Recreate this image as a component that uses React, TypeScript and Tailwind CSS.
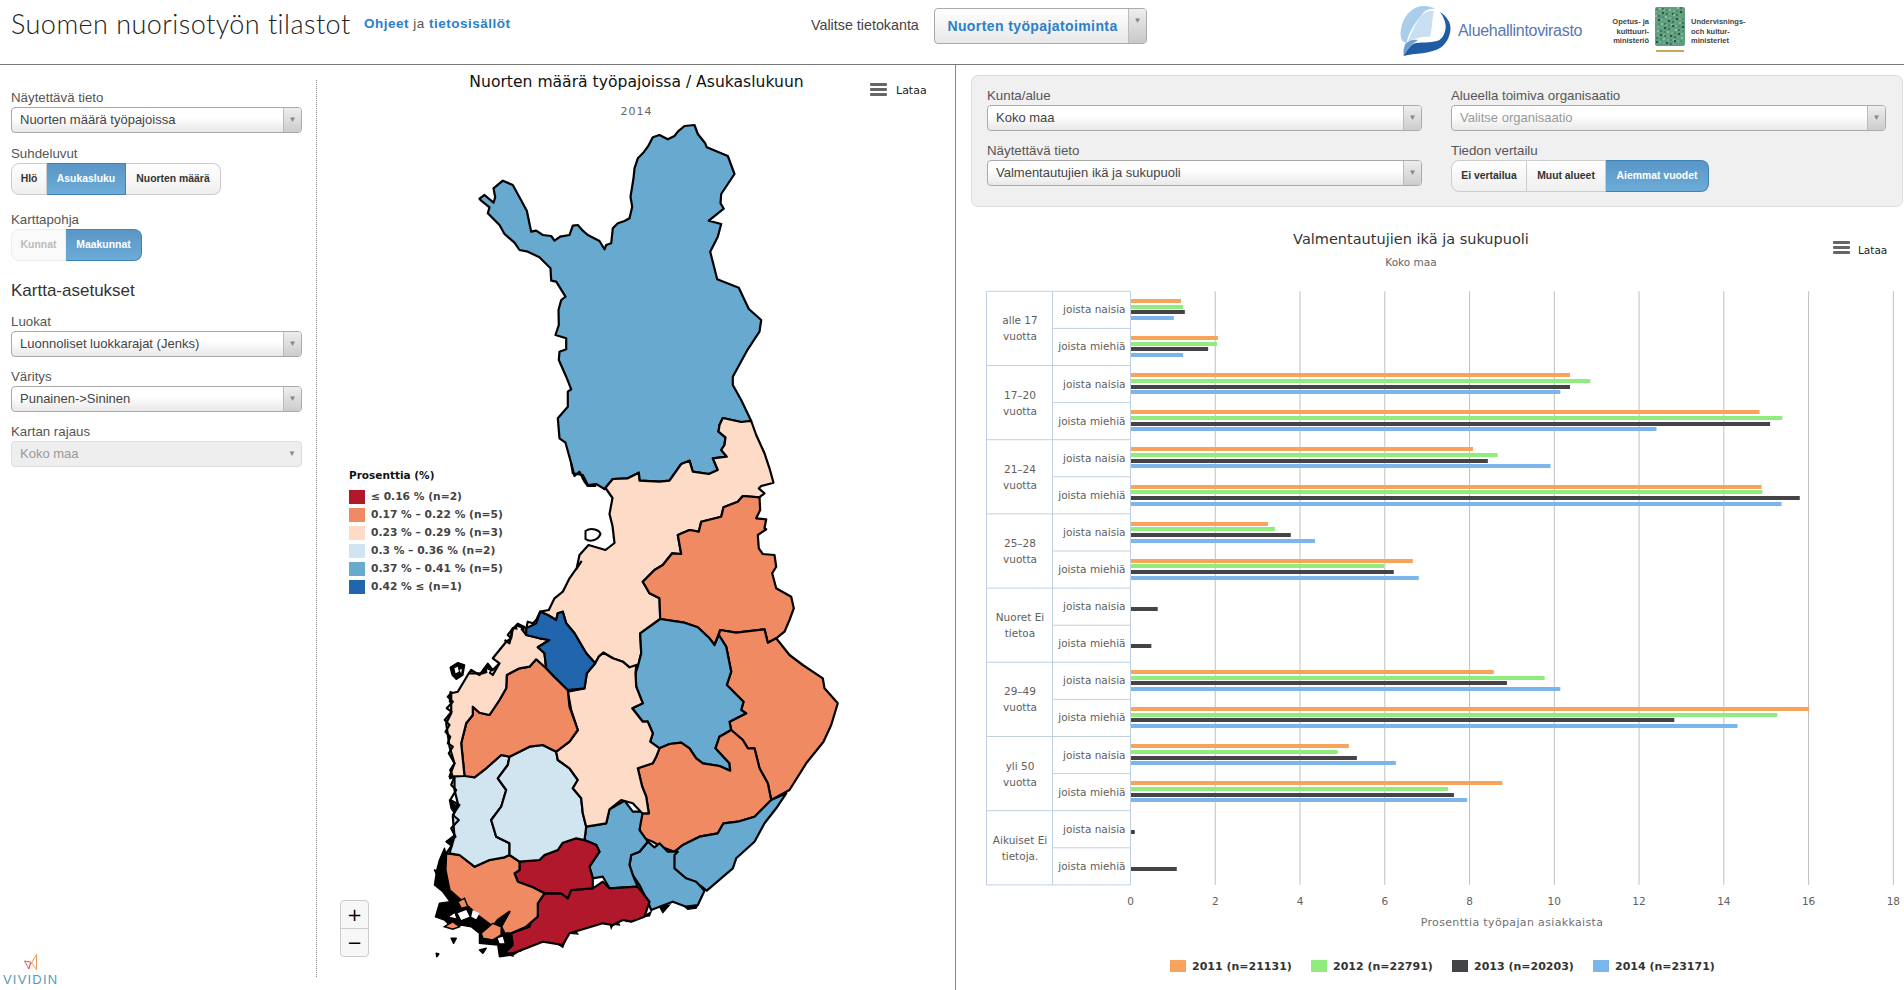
const toPoints = (ox: number, oy: number, s: string) =>
  s
    .trim()
    .split(/\s+/)
    .map((p) => {
      const [x, y] = p.split(",").map(Number);
      return `${(ox + x / 3).toFixed(1)},${(oy + y / 3).toFixed(1)}`;
    })
    .join(" ");

// traced from crops of the map, each crop has its own origin
const z5 = (s: string) => toPoints(440, 110, s);
const z10 = (s: string) => toPoints(430, 560, s);
const z11 = (s: string) => toPoints(430, 770, s);
const z12 = (s: string) => toPoints(620, 420, s);

const RED = "#b2182b";
const ORANGE = "#ef8a62";
const PEACH = "#fddbc7";
const LIGHT = "#d1e5f0";
const BLUE = "#67a9cf";
const DARK = "#2166ac";

const regions: { fill: string; points: string }[] = [
  {
    fill: BLUE,
    points: z5(
      "120,266 135,255 162,278 167,262 162,235 190,212 220,225 240,262 262,302 275,365 290,362 310,375 335,378 345,392 362,380 390,375 400,347 415,345 430,362 445,375 480,393 495,418 500,405 515,400 520,355 535,340 555,333 570,325 578,290 573,260 582,205 585,175 595,145 610,130 625,110 640,82 660,75 685,88 705,78 715,65 735,48 765,45 775,72 797,100 802,112 865,138 885,192 845,252 843,280 853,296 808,332 845,342 835,380 812,425 833,508 898,533 928,597 965,630 960,665 925,718 880,800 880,825 905,870 935,933 905,936 850,924 840,945 837,965 858,982 855,1005 845,1020 862,1040 820,1045 835,1080 808,1092 760,1085 750,1052 725,1062 690,1112 660,1115 600,1112 598,1088 565,1105 520,1107 495,1137 470,1122 445,1125 430,1095 400,1090 395,1060 378,998 360,985 355,925 385,890 385,845 395,838 380,800 358,750 360,725 380,718 380,685 348,675 358,645 357,600 365,570 378,560 350,515 335,512 333,475 300,442 265,425 240,420 225,398 195,372 180,345 145,310 150,292 125,272"
    ),
  },
  {
    fill: PEACH,
    points: [
      z5(
        "495,1137 520,1107 565,1105 598,1088 600,1112 660,1115 690,1112 725,1062 750,1052 760,1085 808,1092 835,1080 820,1045 862,1040 845,1020 855,1005 858,982 837,965 840,945 850,924 905,936 935,933 950,975 975,1030 990,1075 1002,1118 965,1128 958,1135 975,1150 962,1160"
      ),
      z12(
        "420,232 370,228 355,245 312,262 305,290 245,305 238,335 210,330 175,345 185,402 158,400 130,435 105,450 70,485 90,520 120,535 122,597 62,640 65,700 55,740"
      ),
      z10(
        "600,322 580,305 550,295 522,278 508,290 497,310 470,280 435,220 410,190 400,155 385,160 380,180 355,165 332,155 358,150 375,115 400,95 420,55 455,5"
      ),
      "577,569 580,555 589,545 606,550 615,543 613,526 610,514 613,498 606,488",
    ].join(" "),
  },
  {
    fill: ORANGE,
    points: z12(
      "420,232 422,270 410,295 440,298 435,325 440,328 415,345 418,385 430,402 465,405 470,440 458,460 470,505 515,530 523,565 510,600 495,635 470,655 445,668 435,628 350,638 302,630 285,675 270,655 235,622 195,608 122,597 120,535 90,520 70,485 105,450 130,435 158,400 185,402 175,345 210,330 238,335 245,305 305,290 312,262 355,245 370,228"
    ),
  },
  {
    fill: ORANGE,
    points: z12(
      "302,630 350,638 435,628 445,668 470,655 510,705 550,735 610,775 615,805 655,850 635,915 612,965 560,1030 510,1110 455,1140 445,1090 420,1045 405,985 385,985 370,960 335,930 330,905 380,880 365,870 372,845 322,795 335,755 320,680 298,645"
    ),
  },
  {
    fill: BLUE,
    points: z12(
      "122,597 195,608 235,622 270,655 285,675 298,645 320,680 335,755 322,795 372,845 365,870 380,880 330,905 335,930 300,950 288,985 330,1030 332,1052 300,1038 250,1030 230,1015 210,985 185,968 150,972 120,985 92,965 100,940 85,905 70,905 38,865 70,850 50,800 48,760 55,740 65,700 62,640"
    ),
  },
  {
    fill: ORANGE,
    points: z12(
      "120,985 150,972 185,968 210,985 230,1015 250,1030 300,1038 332,1052 330,1030 288,985 300,950 335,930 370,960 385,985 405,985 420,1045 445,1090 455,1140 405,1190 355,1205 312,1210 295,1240 240,1250 190,1275 165,1295 125,1280 100,1265 62,1250 60,1215 68,1180 88,1180 80,1130 68,1100 55,1045 100,1030 110,1010"
    ),
  },
  {
    fill: BLUE,
    points: z12(
      "455,1140 500,1120 470,1165 435,1210 405,1265 350,1315 340,1345 262,1412 240,1395 195,1385 165,1350 160,1320 165,1295 190,1275 240,1250 295,1240 312,1210 355,1205 405,1190"
    ),
  },
  {
    fill: BLUE,
    points: z11(
      "655,215 675,232 690,220 715,245 745,245 735,255 735,295 770,325 800,335 825,362 805,405 770,410 730,395 690,410 665,420 655,395 630,345 610,315 600,285 605,255 630,245"
    ),
  },
  {
    fill: BLUE,
    points: z11(
      "540,118 585,92 610,125 640,125 630,180 655,215 630,245 605,255 600,285 610,315 625,350 540,355 520,320 490,325 480,290 510,245 500,225 465,210 470,170 530,160"
    ),
  },
  {
    fill: RED,
    points: z11(
      "345,370 400,370 415,385 425,360 490,355 520,335 540,355 625,350 660,395 645,440 605,455 580,450 550,465 520,460 470,475 420,490 400,525 340,515 290,535 250,550 225,550 250,525 245,490 300,470 325,400"
    ),
  },
  {
    fill: RED,
    points: z11(
      "270,275 330,270 345,255 385,240 400,218 440,205 470,212 500,225 510,245 480,290 490,325 490,355 425,360 415,385 395,370 345,370 310,352 265,335 255,310 270,300"
    ),
  },
  {
    fill: ORANGE,
    points: z11(
      "50,250 90,255 135,290 180,270 225,262 240,255 270,275 270,300 255,310 265,335 310,352 345,370 325,400 325,440 290,470 245,490 225,490 215,470 240,425 205,450 190,470 150,440 100,395 60,360 48,300"
    ),
  },
  {
    fill: LIGHT,
    points: [
      z10("62,655 100,640 135,652 170,625 215,585 240,590 235,615 205,655"),
      z11(
        "230,60 215,110 185,150 200,200 240,220 240,255 225,262 180,270 135,290 90,255 60,250 75,200 70,140 85,100 75,60 75,20"
      ),
    ].join(" "),
  },
  {
    fill: LIGHT,
    points: [
      z10("240,590 300,560 340,555 380,575 385,600 420,625 445,660"),
      z11(
        "445,30 430,55 455,85 460,130 470,170 465,210 440,205 400,218 385,240 345,255 330,270 270,275 240,255 240,220 200,200 185,150 215,110 230,60 205,25"
      ),
      z10("235,615"),
    ].join(" "),
  },
  {
    fill: PEACH,
    points: [
      z10("497,310 508,290 522,278 550,295 580,305 600,322 620,315"),
      z12(
        "48,760 50,800 70,850 38,865 70,905 85,905 100,940 92,965 120,985 110,1010 100,1030 55,1045 68,1100 80,1130 88,1180 68,1180 40,1150 5,1140"
      ),
      z11("540,118 530,160 470,170 460,130 455,85 430,55 445,30"),
      z10("445,660 420,625 385,600 380,575 420,545 445,510 425,450 415,395 465,385 472,340"),
    ].join(" "),
  },
  {
    fill: ORANGE,
    points: z10(
      "105,648 95,550 110,490 130,465 130,440 150,458 180,465 210,420 230,385 232,345 270,325 300,320 320,298 350,325 372,348 415,390 420,440 445,510 420,545 380,575 340,555 300,560 240,590 215,585 170,625 135,652"
    ),
  },
  {
    fill: PEACH,
    points: z10(
      "60,650 75,610 60,560 50,490 65,460 65,400 85,395 118,340 160,340 190,330 210,310 190,295 230,245 245,235 250,205 275,205 290,225 330,235 360,240 325,262 345,280 350,325 320,298 300,320 270,325 232,345 230,385 210,420 180,465 150,458 130,440 130,465 110,490 95,550 105,648"
    ),
  },
  {
    fill: DARK,
    points: z10(
      "290,225 290,205 320,190 332,155 355,165 380,180 385,160 400,155 410,190 435,220 470,280 497,310 472,340 465,385 415,390 372,348 350,325 345,280 325,262 360,240 330,235"
    ),
  },
];

// the archipelago: mostly black outlines, so drawn as solid blobs
const islands = [
  z11("45,235 30,270 22,300 15,345 40,365 62,395 30,400 18,440 45,450 65,470 95,465 125,470 150,490 150,520 205,525 210,560 250,555 290,530 330,400 200,400 60,300"),
  z11("15,300 25,305 22,315"),
  z11("65,505 80,505 72,520"),
  z11("150,540 170,535 160,550"),
  z11("20,550 28,552 22,560"),
  z10("62,322 85,308 105,315 100,345 80,358 68,345"),
  z10("160,330 175,310 195,335 175,355"),
  z10("62,395 75,400 72,430 60,425"),
  z10("250,205 265,190 285,200 280,225 260,220"),
  z10("200,285 220,262 225,280 210,300"),
  z11("60,90 100,125 75,130 65,115"),
  z11("75,195 50,215 62,225 85,210"),
  z11("45,260 60,250 65,300 45,300"),
];

const coastSpikes = [
  z11("420,490 435,478 445,492"),
  z11("520,460 535,435 545,475 560,445 570,465"),
  z11("570,450 580,420 590,452 600,410 608,448"),
  z11("605,440 618,420 630,438"),
  z11("640,440 660,438 665,425"),
  z11("690,410 700,428 720,405"),
  z11("760,405 775,418 800,415 810,395"),
  z11("340,515 355,505 380,520 400,532 410,505"),
  z11("270,545 300,505 295,530"),
  z11("225,552 250,558 240,545"),
];

// rough stretches of shoreline, drawn on top of the plain outlines
const roughCoast = [
  z10("65,400 55,410 70,425 52,445 66,455 46,480 60,495 48,515 62,530 55,550 70,560 58,580 75,610 62,630 70,650"),
  z11("75,20 65,45 80,60 62,90 90,105 70,135 88,150 65,175 78,200 52,215 68,225 50,250"),
  z5("395,1060 405,1098 420,1085 435,1115 445,1128 470,1128"),
  z10("118,340 125,330 150,345 165,325 190,345 210,310"),
  z10("245,235 235,225 250,205 240,250 225,240"),
  z10("332,155 320,180 310,190 295,185 290,205"),
];

const orangePatches = [
  z11("45,470 70,455 90,470 70,478"),
  z11("155,490 190,460 215,470 215,495 190,510 160,505"),
  z11("85,395 105,385 115,410 95,415"),
];

// gaps in the black of the archipelago
const whiteHoles = [
  z11("85,430 110,420 120,440 95,450"),
  z11("130,420 150,430 140,448 125,440"),
  z11("60,440 75,430 80,445"),
  z11("205,505 220,500 225,520 210,520"),
  z10("75,325 85,320 88,335 78,340"),
  z10("90,330 97,326 95,340"),
  z10("172,328 182,332 175,342"),
  z10("262,200 275,205 268,215"),
];

const legendRows = [
  { color: RED, label: "≤ 0.16 % (n=2)" },
  { color: ORANGE, label: "0.17 % – 0.22 % (n=5)" },
  { color: PEACH, label: "0.23 % – 0.29 % (n=3)" },
  { color: LIGHT, label: "0.3 % – 0.36 % (n=2)" },
  { color: BLUE, label: "0.37 % – 0.41 % (n=5)" },
  { color: DARK, label: "0.42 % ≤ (n=1)" },
];

const groups = [
  ["alle 17", "vuotta"],
  ["17–20", "vuotta"],
  ["21–24", "vuotta"],
  ["25–28", "vuotta"],
  ["Nuoret Ei", "tietoa"],
  ["29–49", "vuotta"],
  ["yli 50", "vuotta"],
  ["Aikuiset Ei", "tietoja."],
];

const series = [
  { name: "2011 (n=21131)", color: "#f7a35c", legendX: 1170 },
  { name: "2012 (n=22791)", color: "#90ed7d", legendX: 1311 },
  { name: "2013 (n=20203)", color: "#434348", legendX: 1452 },
  { name: "2014 (n=23171)", color: "#7cb5ec", legendX: 1593 },
];

const bars: (number | null)[][] = [
  [1.18, 1.23, 1.27, 1.01],
  [2.05, 2.03, 1.82, 1.23],
  [10.36, 10.84, 10.36, 10.13],
  [14.83, 15.37, 15.08, 12.4],
  [8.07, 8.65, 8.42, 9.9],
  [14.88, 14.9, 15.78, 15.35],
  [3.23, 3.4, 3.77, 4.34],
  [6.65, 5.97, 6.2, 6.79],
  [null, null, 0.63, null],
  [null, null, 0.48, null],
  [8.56, 9.76, 8.87, 10.13],
  [16, 15.25, 12.82, 14.31],
  [5.14, 4.88, 5.33, 6.25],
  [8.76, 7.48, 7.62, 7.93],
  [null, null, 0.09, null],
  [null, null, 1.08, null],
];

const AXIS_X = 1130.5;
const UNIT = 42.38;
const TOP = 291.3;
const ROW = 37.1;

function Select({
  label,
  value,
  placeholder,
  disabled,
}: {
  label: string;
  value: string;
  placeholder?: boolean;
  disabled?: boolean;
}) {
  return (
    <div>
      <div className="h-[19px] text-[13.3px] leading-[19px] text-[#555]">{label}</div>
      <div
        className={`flex h-[26px] items-stretch overflow-hidden rounded-[4px] border border-[#aaa] text-[13px] ${
          disabled
            ? "border-[#ddd] bg-[#eee] text-[#999]"
            : "bg-gradient-to-b from-white from-40% to-[#e8e8e8]"
        }`}
      >
        <div
          className={`flex flex-1 items-center pl-[8px] ${
            placeholder ? "text-[#999]" : disabled ? "" : "text-[#444]"
          }`}
        >
          {value}
        </div>
        <div
          className={`flex w-[18px] items-center justify-center text-[8px] text-[#888] ${
            disabled ? "" : "border-l border-[#bbb] bg-gradient-to-b from-[#eee] to-[#ccc]"
          }`}
        >
          ▼
        </div>
      </div>
    </div>
  );
}

function ButtonGroup({
  items,
}: {
  items: { text: string; width: number; active?: boolean; off?: boolean }[];
}) {
  return (
    <div className="flex h-[32px] w-fit">
      {items.map((item, index) => (
        <div
          key={item.text}
          style={{ width: item.width }}
          className={`flex items-center justify-center border text-[10.4px] font-bold ${
            index === 0 ? "rounded-l-[8px]" : "border-l-0"
          } ${index === items.length - 1 ? "rounded-r-[8px]" : ""} ${
            item.active
              ? "border-[#3f82b5] bg-gradient-to-b from-[#5a96c7] to-[#6cacd8] text-white"
              : item.off
                ? "border-[#eee] bg-[#fafafa] text-[#bbb]"
                : "border-[#ccc] bg-gradient-to-b from-white to-[#efefef] text-[#333]"
          }`}
        >
          {item.text}
        </div>
      ))}
    </div>
  );
}

function Hamburger() {
  return (
    <div className="flex w-[17px] flex-col gap-[2px]">
      <div className="h-[3px] rounded-[1px] bg-[#666]" />
      <div className="h-[3px] rounded-[1px] bg-[#666]" />
      <div className="h-[3px] rounded-[1px] bg-[#666]" />
    </div>
  );
}

function AviLogo() {
  return (
    <svg width="52" height="56" viewBox="0 0 52 56" className="mt-[2px] shrink-0">
      <path
        d="M0.7 34C0 20 8 6 22 4C28 3.5 33 5 36 7C28 6 24 9 21 14C14 22 9 30 6.5 41C3 40 1 38 0.7 34Z"
        fill="#a9cdeb"
      />
      <path d="M21 14C25 10 30 8 34 9C32 18 32 28 30 35C24 34 15 36 8 40C11 30 16 21 21 14Z" fill="#c9dff2" />
      <path d="M3.6 54C3 48 4 44 6 41C10 38 14 37 18 38C12 42 7 47 3.6 54Z" fill="#6f9fd0" />
      <path
        d="M3.6 54C8 46 12 42 16 41C25 40 33 41 39.5 38C45 34 46 26 45.6 23C45 18 43 14 40 10C46 14 51 20 50.5 27C50 36 45 43 40 46C30 52 15 51 3.6 54Z"
        fill="#1f5ca6"
      />
    </svg>
  );
}

function OkmEmblem() {
  const dots = Array.from({ length: 90 }, (_, i) => ({
    x: 1 + ((i * 37) % 28),
    y: 1 + ((i * 53) % 37),
    r: 0.5 + (i % 3) * 0.3,
  }));
  return (
    <svg width="30" height="46" viewBox="0 0 30 46" className="shrink-0">
      <rect x="0" y="0" width="30" height="39" rx="2" fill="#5f9f80" />
      {dots.map((d, i) => (
        <circle key={i} cx={d.x} cy={d.y} r={d.r} fill={i % 2 ? "#1f3d30" : "#9cc7ad"} />
      ))}
      <rect x="1" y="43" width="28" height="2" fill="#c8a850" />
    </svg>
  );
}

function VividinLogo() {
  return (
    <div className="absolute bottom-0 left-[3px] flex h-[36px] flex-col items-center overflow-hidden">
      <svg width="14" height="17" viewBox="0 0 14 17" fill="none" strokeWidth="1">
        <path d="M4 15L12.5 0.5V15.5L7 8" stroke="#e59a5c" />
        <path d="M0.5 7L5 15L6.5 8Z" stroke="#dc5a5a" />
      </svg>
      <div className="text-[13px] leading-[17px] tracking-[1.2px] text-[#5b9ab0]">VIVIDIN</div>
    </div>
  );
}

function FinlandMap() {
  return (
    <svg viewBox="317 65 638 925" className="absolute inset-0 h-full w-full">
      {islands.map((points, i) => (
        <polygon key={i} points={points} fill="#000" stroke="#000" strokeWidth="1.5" strokeLinejoin="round" />
      ))}
      {coastSpikes.map((points, i) => (
        <polygon key={i} points={points} fill="#000" stroke="#000" strokeWidth="1.2" />
      ))}
      {regions.map((region, i) => (
        <polygon
          key={i}
          points={region.points}
          fill={region.fill}
          stroke="#000"
          strokeWidth="2.2"
          strokeLinejoin="round"
        />
      ))}
      {roughCoast.map((points, i) => (
        <polyline key={i} points={points} fill="none" stroke="#000" strokeWidth="2.2" strokeLinejoin="round" />
      ))}
      {orangePatches.map((points, i) => (
        <polygon key={i} points={points} fill={ORANGE} stroke="#000" strokeWidth="1.5" />
      ))}
      {whiteHoles.map((points, i) => (
        <polygon key={i} points={points} fill="#fff" />
      ))}
      <path d="M586 531C592 527 600 530 601 534C598 541 590 542 586 539Z" fill="#fff" stroke="#000" strokeWidth="2" />
    </svg>
  );
}

function BarChart() {
  const bottom = TOP + ROW * 16;
  return (
    <svg viewBox="956 207 948 783" className="block h-[783px] w-[948px] font-['DejaVu_Sans',sans-serif]">
      <text x="1411" y="244" textAnchor="middle" fontSize="14.5" fill="#333">
        Valmentautujien ikä ja sukupuoli
      </text>
      <text x="1411" y="266" textAnchor="middle" fontSize="10.5" fill="#666">
        Koko maa
      </text>

      <rect x="1833" y="241" width="17" height="3" rx="1" fill="#666" />
      <rect x="1833" y="246" width="17" height="3" rx="1" fill="#666" />
      <rect x="1833" y="251" width="17" height="3" rx="1" fill="#666" />
      <text x="1858" y="254" fontSize="10.5" fill="#222">
        Lataa
      </text>

      {[2, 4, 6, 8, 10, 12, 14, 16, 18].map((tick) => (
        <line
          key={tick}
          x1={AXIS_X + tick * UNIT}
          x2={AXIS_X + tick * UNIT}
          y1={TOP}
          y2={bottom}
          stroke="#c0c0c0"
        />
      ))}

      {Array.from({ length: 17 }, (_, i) => (
        <line
          key={i}
          x1={i % 2 === 0 ? 986.5 : 1052.5}
          x2={AXIS_X}
          y1={TOP + i * ROW}
          y2={TOP + i * ROW}
          stroke="#c0d0e0"
        />
      ))}
      <line x1="986.5" x2="986.5" y1={TOP} y2={bottom} stroke="#c0d0e0" />
      <line x1="1052.5" x2="1052.5" y1={TOP} y2={bottom} stroke="#c0d0e0" />
      <line x1={AXIS_X} x2={AXIS_X} y1={TOP} y2={bottom} stroke="#c0d0e0" />

      {groups.map((lines, i) => (
        <text key={i} textAnchor="middle" fontSize="10.5" fill="#606060">
          <tspan x="1020" y={TOP + i * 2 * ROW + 33}>
            {lines[0]}
          </tspan>
          <tspan x="1020" y={TOP + i * 2 * ROW + 49}>
            {lines[1]}
          </tspan>
        </text>
      ))}
      {bars.map((_, i) => (
        <text key={i} x="1125.5" y={TOP + i * ROW + 22} textAnchor="end" fontSize="10.5" fill="#606060">
          {i % 2 === 0 ? "joista naisia" : "joista miehiä"}
        </text>
      ))}

      {bars.map((row, i) =>
        row.map((value, s) =>
          value === null ? null : (
            <rect
              key={`${i}-${s}`}
              x={AXIS_X + 0.5}
              y={Math.round(TOP + i * ROW + 7.7 + s * 5.67)}
              width={value * UNIT}
              height="4"
              fill={series[s].color}
            />
          )
        )
      )}

      {Array.from({ length: 10 }, (_, i) => (
        <text key={i} x={AXIS_X + i * 2 * UNIT} y="905" textAnchor="middle" fontSize="10.5" fill="#606060">
          {i * 2}
        </text>
      ))}
      <text x="1512" y="926" textAnchor="middle" fontSize="11" letterSpacing="0.35" fill="#707070">
        Prosenttia työpajan asiakkaista
      </text>

      {series.map((item) => (
        <g key={item.name}>
          <rect x={item.legendX} y="960" width="16" height="12" fill={item.color} />
          <text x={item.legendX + 22} y="970" fontSize="11" fontWeight="bold" fill="#333">
            {item.name}
          </text>
        </g>
      ))}
    </svg>
  );
}

export default function App() {
  return (
    <div className="relative h-[990px] w-[1904px] overflow-hidden bg-white font-['Liberation_Sans',Arial,sans-serif] text-[#333]">
      <header className="flex h-[65px] items-start border-b border-[#777]">
        <div className="flex w-[811px] items-center pl-[11px] pt-[7px]">
          <h1 className="w-[353px] font-['Lato',sans-serif] text-[27px] font-light leading-[34px] tracking-[0.45px] text-[#222]">
            Suomen nuorisotyön tilastot
          </h1>
          <div className="pt-[1px] text-[13.5px] tracking-[0.5px] text-[#555]">
            <a className="font-bold text-[#2b80c9]">Ohjeet</a> ja{" "}
            <a className="font-bold text-[#2b80c9]">tietosisällöt</a>
          </div>
        </div>
        <div className="flex w-[589px] items-center pt-[8px]">
          <span className="w-[123px] text-[14.3px] text-[#444]">Valitse tietokanta</span>
          <div className="flex h-[36px] w-[213px] overflow-hidden rounded-[4px] border border-[#aaa] bg-gradient-to-b from-white to-[#e8e8e8]">
            <div className="flex flex-1 items-center justify-center pl-[2px] text-[14px] font-bold tracking-[0.4px] text-[#2b80c9]">
              Nuorten työpajatoiminta
            </div>
            <div className="flex w-[18px] justify-center border-l border-[#bbb] bg-gradient-to-b from-[#eee] to-[#c8c8c8] pt-[8px] text-[8px] leading-none text-[#888]">
              ▼
            </div>
          </div>
        </div>
        <div className="flex items-start">
          <AviLogo />
          <span className="ml-[6px] mt-[22px] w-[142px] text-[16px] leading-[18px] tracking-[-0.3px] text-[#5a77b0]">
            Aluehallintovirasto
          </span>
          <div className="mt-[17px] w-[49px] text-right text-[7.5px] font-bold leading-[9.5px] text-[#444]">
            Opetus- ja
            <br />
            kulttuuri-
            <br />
            ministeriö
          </div>
          <div className="ml-[6px] mt-[7px]">
            <OkmEmblem />
          </div>
          <div className="ml-[6px] mt-[17px] text-[7.5px] font-bold leading-[9.5px] text-[#444]">
            Undervisnings-
            <br />
            och kultur-
            <br />
            ministeriet
          </div>
        </div>
      </header>

      <div className="flex h-[925px]">
        <aside className="relative w-[316px] pl-[11px] pr-[14px] pt-[23px]">
          <div className="flex flex-col">
            <Select label="Näytettävä tieto" value="Nuorten määrä työpajoissa" />
            <div className="mt-[11px]">
              <div className="h-[19px] text-[13.3px] leading-[19px] text-[#555]">Suhdeluvut</div>
              <ButtonGroup
                items={[
                  { text: "Hlö", width: 36 },
                  { text: "Asukasluku", width: 79, active: true },
                  { text: "Nuorten määrä", width: 95 },
                ]}
              />
            </div>
            <div className="mt-[15px]">
              <div className="h-[19px] text-[13.3px] leading-[19px] text-[#555]">Karttapohja</div>
              <ButtonGroup
                items={[
                  { text: "Kunnat", width: 55, off: true },
                  { text: "Maakunnat", width: 76, active: true },
                ]}
              />
            </div>
            <h2 className="mt-[18px] h-[24px] text-[17px] leading-[24px] text-[#333]">Kartta-asetukset</h2>
            <div className="mt-[9px]">
              <Select label="Luokat" value="Luonnoliset luokkarajat (Jenks)" />
            </div>
            <div className="mt-[10px]">
              <Select label="Väritys" value="Punainen->Sininen" />
            </div>
            <div className="mt-[10px]">
              <Select label="Kartan rajaus" value="Koko maa" disabled />
            </div>
          </div>
          <VividinLogo />
        </aside>

        <section className="relative w-[639px] font-['DejaVu_Sans',sans-serif]">
          <div className="absolute bottom-[13px] left-0 top-[15px] border-l border-dotted border-[#888]" />
          <FinlandMap />
          <div className="relative flex flex-col items-center pl-[2px] pt-[7px]">
            <div className="text-[15.6px] leading-[20px] text-[#111]">Nuorten määrä työpajoissa / Asukaslukuun</div>
            <div className="mt-[13px] text-[11px] leading-[14px] tracking-[1px] text-[#666]">2014</div>
          </div>
          <div className="absolute left-[554px] top-[15px] flex items-center gap-[9px]">
            <Hamburger />
            <span className="mt-[3px] text-[11px] text-[#222]">Lataa</span>
          </div>

          <div className="absolute left-[33px] top-[403px]">
            <div className="mb-[6px] text-[10.5px] font-bold leading-[14px] text-[#111]">Prosenttia (%)</div>
            <div className="flex flex-col">
              {legendRows.map((row) => (
                <div key={row.label} className="flex h-[18px] items-center gap-[6px]">
                  <div className="h-[14px] w-[16px]" style={{ backgroundColor: row.color }} />
                  <span className="text-[10.7px] font-bold text-[#444]">{row.label}</span>
                </div>
              ))}
            </div>
          </div>

          <div className="absolute left-[24px] top-[835px] flex h-[57px] w-[29px] flex-col overflow-hidden rounded-[4px] border border-[#ccc] bg-[#f7f7f7] text-[18px] text-black">
            <div className="flex flex-1 items-center justify-center border-b border-[#ccc]">+</div>
            <div className="flex flex-1 items-center justify-center">−</div>
          </div>
        </section>

        <main className="flex-1 border-l border-[#888]">
          <div className="ml-[15px] mr-[1px] mt-[10px] h-[132px] rounded-[7px] border border-[#ddd] bg-[#f0f0f0] pl-[15px] pr-[16px] pt-[10px]">
            <div className="grid grid-cols-[435px_435px] gap-x-[29px] gap-y-[10px]">
              <Select label="Kunta/alue" value="Koko maa" />
              <Select label="Alueella toimiva organisaatio" value="Valitse organisaatio" placeholder />
              <Select label="Näytettävä tieto" value="Valmentautujien ikä ja sukupuoli" />
              <div>
                <div className="h-[19px] text-[13.3px] leading-[19px] text-[#555]">Tiedon vertailu</div>
                <ButtonGroup
                  items={[
                    { text: "Ei vertailua", width: 76 },
                    { text: "Muut alueet", width: 79 },
                    { text: "Aiemmat vuodet", width: 103, active: true },
                  ]}
                />
              </div>
            </div>
          </div>
          <BarChart />
        </main>
      </div>
    </div>
  );
}
